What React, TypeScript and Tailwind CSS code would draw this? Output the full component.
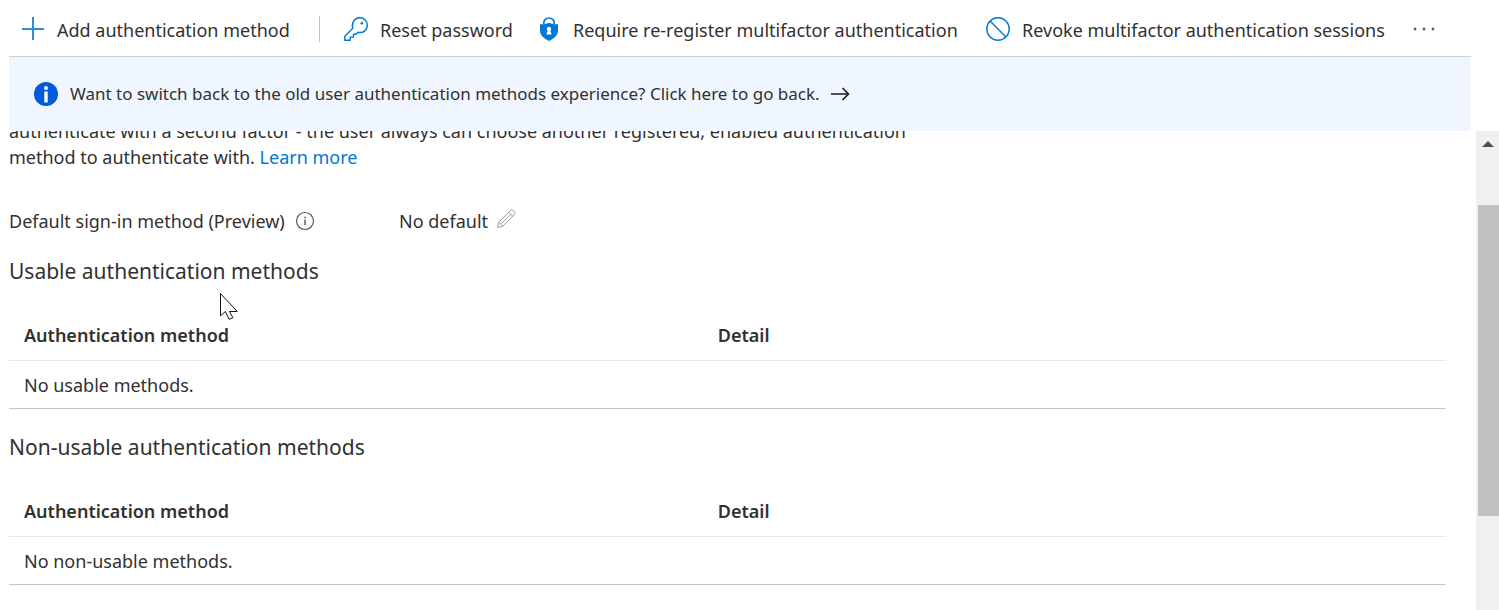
import type { ReactNode } from 'react';

const toolbarItems = [
  { label: 'Reset password', icon: <KeyIcon />, width: 'w-[193px]' },
  { label: 'Require re-register multifactor authentication', icon: <ShieldLockIcon />, width: 'w-[449px]' },
  { label: 'Revoke multifactor authentication sessions', icon: <BlockIcon />, width: 'w-[422px]' },
];

const sections = [
  { title: 'Usable authentication methods', empty: 'No usable methods.' },
  { title: 'Non-usable authentication methods', empty: 'No non-usable methods.' },
];

function PlusIcon() {
  return (
    <svg className="size-6 shrink-0" viewBox="0 0 24 24" fill="none" stroke="#2b8ddd" strokeWidth="2">
      <path d="M12 0v23M1 12h22" />
    </svg>
  );
}

function KeyIcon() {
  return (
    <svg className="size-6 shrink-0" viewBox="0 0 24 24" fill="none" stroke="#0078d4" strokeWidth="1.4" strokeLinejoin="round">
      <path d="M.8 19.3 8.6 11.5C7.3 5.7 10.7.8 16 .8c4.2 0 7.3 3.2 7.3 7.3 0 5.2-4.3 8.4-9.3 7.2l-2 2H9.5v2.8H6.2v3.1H.8z" />
      <circle cx="17.8" cy="6.2" r="1.3" fill="#0078d4" stroke="none" />
    </svg>
  );
}

function ShieldLockIcon() {
  return (
    <svg className="size-6 shrink-0" viewBox="0 0 24 24">
      <path d="M6.8 7V5.8a5.2 4.8 0 0 1 10.4 0V7" fill="none" stroke="#0078d4" strokeWidth="1.7" />
      <path d="M12 5.800c2.4 1.2 5.6 1.500 9 1.500v6.200c0 5-4 7.900-9 10.400-5-2.500-9-5.400-9-10.400V7.300c3.400 0 6.600-.3 9-1.500z" fill="#0078d4" />
      <circle cx="12" cy="12" r="2.2" fill="#fff" />
      <path d="M11 13h2l1.700 4.500H9.300z" fill="#fff" />
    </svg>
  );
}

function BlockIcon() {
  return (
    <svg className="size-6 shrink-0" viewBox="0 0 24 24" fill="none" stroke="#0078d4" strokeWidth="1.4">
      <circle cx="12" cy="12" r="11.2" />
      <path d="m4.100 4.100 15.800 15.800" />
    </svg>
  );
}

function InfoBadge() {
  return (
    <svg className="size-6 shrink-0" viewBox="0 0 24 24">
      <circle cx="12" cy="12" r="12" fill="#015cda" />
      <circle cx="12" cy="6" r="2" fill="#fff" />
      <path d="M10.3 9.500h3.400V20.500h-3.400z" fill="#fff" />
    </svg>
  );
}

function ArrowIcon() {
  return (
    <svg className="size-5 shrink-0" viewBox="0 0 20 20" fill="none" stroke="#1b1a19" strokeWidth="1.6">
      <path d="M1 10h17.500M12.500 4l6 6-6 6" />
    </svg>
  );
}

function InfoOutline() {
  return (
    <svg className="size-5 shrink-0" viewBox="0 0 20 20" fill="none" stroke="#555">
      <circle cx="10" cy="10" r="8.5" strokeWidth="1.2" />
      <path d="M10 8.500V14" strokeWidth="1.4" />
      <path d="M10 5.700v1.500" strokeWidth="1.5" />
    </svg>
  );
}

function PencilIcon() {
  return (
    <svg className="size-5" viewBox="0 0 20 20" fill="none" stroke="#a19f9d" strokeLinejoin="round">
      <path d="m1.500 18.500 1.300-5.300L14.300 1.700a2.100 2.100 0 0 1 3 0l1 1a2.100 2.100 0 0 1 0 3L6.800 17.200zM2.800 13.200l4 4M12.800 3.200l4 4M14.800 5.200 4.800 15.200" />
    </svg>
  );
}

function CursorIcon() {
  return (
    <svg className="absolute left-[220px] top-[292px] h-[30px] w-5" viewBox="0 0 20 30" fill="#fff" stroke="#111122" strokeWidth="1">
      <path d="M.5 1.500v22.300l4.900-4.300 3.700 7.800 3.800-1.600-3.400-6.200h7.700z" />
    </svg>
  );
}

function ToolbarButton({ label, icon, width }: { label: string; icon: ReactNode; width: string }) {
  return (
    <button type="button" className={`flex shrink-0 items-center gap-3 whitespace-nowrap text-left ${width}`}>
      {icon}
      <span className="pt-0.5">{label}</span>
    </button>
  );
}

function MethodsSection({ title, empty }: { title: string; empty: string }) {
  return (
    <section>
      <h2 className="flex h-[50px] items-center text-[21px]">{title}</h2>
      <table className="mt-3 w-full table-fixed border-separate border-spacing-0 text-left">
        <thead>
          <tr className="h-[53px]">
            <th className="w-[48%] border-b border-[#e8e8e8] px-[15px] pt-0.5 font-semibold">Authentication method</th>
            <th className="border-b border-[#e8e8e8] px-[19px] pt-0.5 font-semibold">Detail</th>
          </tr>
        </thead>
        <tbody>
          <tr className="h-12">
            <td colSpan={2} className="border-b border-[#c8c6c4] px-[15px]">{empty}</td>
          </tr>
        </tbody>
      </table>
    </section>
  );
}

export default function App() {
  return (
    <div className="relative flex h-screen flex-col overflow-hidden bg-white font-['Noto_Sans','Open_Sans',sans-serif] text-[18px] leading-[26px] text-[#323130]">
      <header className="ml-[9px] mr-7 flex h-[57px] shrink-0 items-center border-b border-[#d2d0ce] pl-3 pt-0.5">
        <ToolbarButton label="Add authentication method" icon={<PlusIcon />} width="w-[298px]" />
        <span className="mr-6 h-[26px] w-px shrink-0 bg-[#c8c6c4]" />
        {toolbarItems.map((item) => (
          <ToolbarButton key={item.label} {...item} />
        ))}
        <button type="button" aria-label="More commands" className="ml-1 shrink-0">
          <svg className="size-6" viewBox="0 0 24 24" fill="#605e5c">
            <circle cx="3" cy="12" r="1.4" />
            <circle cx="12" cy="12" r="1.4" />
            <circle cx="21" cy="12" r="1.4" />
          </svg>
        </button>
      </header>

      <a href="#" className="ml-[9px] mr-[29px] flex h-[74px] shrink-0 items-center rounded-b bg-[#eff6ff] pl-[25px] text-[17px]">
        <InfoBadge />
        <span className="ml-3 mr-2.5 whitespace-nowrap">
          Want to switch back to the old user authentication methods experience? Click here to go back.
        </span>
        <ArrowIcon />
      </a>

      <div className="flex min-h-0 flex-1">
        <main className="min-w-0 flex-1 overflow-hidden pl-[9px] pr-[30px]">
          {/* scrolled halfway through the first line */}
          <p className="-mt-[13px]">
            authenticate with a second factor - the user always can choose another registered, enabled authentication
            <br />
            method to authenticate with. <a href="#" className="text-[#0078d4]">Learn more</a>
          </p>
          <div className="mt-[38px] flex items-center">
            <div className="flex w-[390px] items-center gap-2.5">
              Default sign-in method (Preview)
              <InfoOutline />
            </div>
            <span>No default</span>
            <button type="button" aria-label="Edit default sign-in method" className="ml-2 pb-1">
              <PencilIcon />
            </button>
          </div>
          <div className="mt-3 space-y-[13px]">
            {sections.map((section) => (
              <MethodsSection key={section.title} {...section} />
            ))}
          </div>
        </main>

        <div className="flex w-[23px] shrink-0 flex-col items-end bg-[#f0f0f0]">
          <svg className="mr-[5px] mt-2 h-2.5 w-3" viewBox="0 0 12 10" fill="#505050">
            <path d="M0 8 6 2l6 6z" />
          </svg>
          <div className="mt-14 h-[65%] w-[21px] bg-[#c1c1c1]" />
        </div>
      </div>
      <CursorIcon />
    </div>
  );
}
